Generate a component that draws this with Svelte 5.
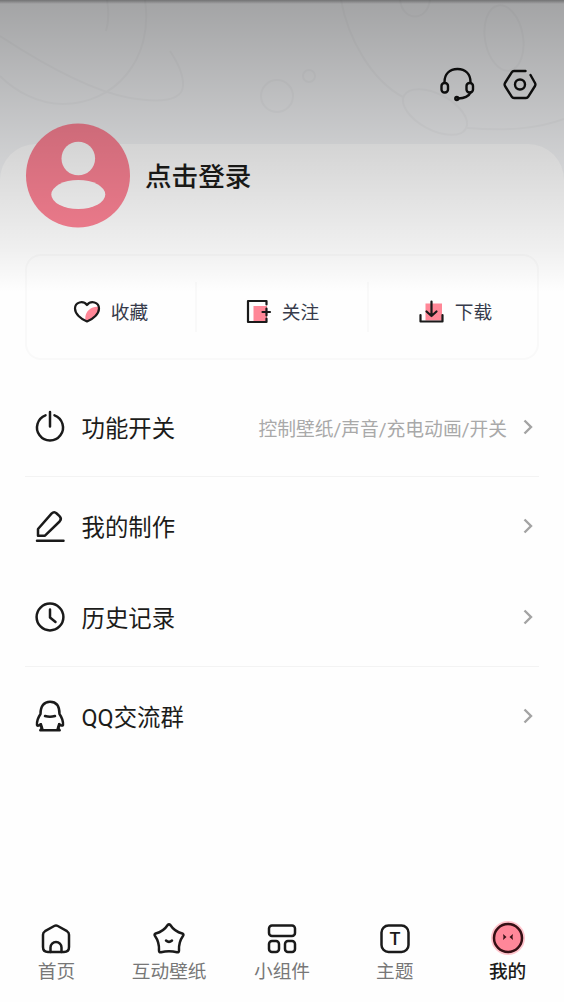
<script>
	const stats = [
		{ icon: 'heart', label: '收藏' },
		{ icon: 'follow', label: '关注' },
		{ icon: 'download', label: '下载' }
	];

	const groups = [
		[{ icon: 'power', label: '功能开关', hint: '控制壁纸/声音/充电动画/开关' }],
		[
			{ icon: 'pen', label: '我的制作' },
			{ icon: 'clock', label: '历史记录' }
		],
		[{ icon: 'qq', label: 'QQ交流群' }]
	];

	const tabs = [
		{ icon: 'home', label: '首页' },
		{ icon: 'star', label: '互动壁纸' },
		{ icon: 'widgets', label: '小组件' },
		{ icon: 'theme', label: '主题' },
		{ icon: 'me', label: '我的' }
	];

	let active = $state('me');
</script>

{#snippet icon(name)}
	<svg class="icon" width="34" height="34" viewBox="0 0 34 34">
		{#if name === 'heart'}
			<path class="pink" d="M29.500 13c-6-1.500-15 3-14.200 12.500l2 1.500c5.500-2.500 12.200-7.500 12.200-14z" />
			<path class="thin" d="M17 27.500C10.500 24.800 5 19.800 5 14.500c0-6.500 8-8.500 12-3.500C21 6 29 8 29 14.500c0 5.300-5.500 10.300-12 13z" />
		{:else if name === 'follow'}
			<path class="pink" d="M12.500 12H26v16H12.500z" />
			<path class="thin" d="M25.500 10.500V7H7v21h18.500v-3.500M21.500 18h7.500M25.500 14.500v7" />
		{:else if name === 'download'}
			<path class="pink" d="M11.500 9.500H28v17H11.500z" />
			<path class="thin" d="M6.500 21v6.500h22V21M17.500 7.500v14.500M12.500 17.500l5 4.500 5-4.500" />
		{:else if name === 'power'}
			<path d="M12.500 5.300a13 13 0 1 0 9 0M17 2v14.500" />
		{:else if name === 'pen'}
			<path d="M5 26.700V20L18.500 4.700q2.600-2.700 5.200-.2l2.800 2.700q2.600 2.700.1 5.300L12 26.700zM4 31.700h26.500" />
		{:else if name === 'clock'}
			<circle cx="17" cy="17" r="13.400" />
			<path d="M17 9.500v8l5.500 4.500" />
		{:else if name === 'qq'}
			<path d="M7.500 15C7.500 7 11 2.800 17 2.800S26.500 7 26.500 15c2.400 3.500 3.800 7.500 3.500 11-.3 1.200-2.500.5-3.800-.8.200 1.600-.3 2.800-1.200 3.800l1.700 2.200H7.300L9 29c-.9-1-1.400-2.200-1.200-3.800C6.500 26.500 4.300 27.200 4 26c-.3-3.500 1.100-7.500 3.500-11z" />
			<path d="M7.800 25.200l1.500 5M26.200 25.200l-1.500 5M12 17q5 1.500 10 0" />
		{:else if name === 'home'}
			<path d="M15.200 5q1.800-1 3.600 0l9.200 5.200q2 1.200 2 3.500v12.300q0 5-5 5H9q-5 0-5-5V13.700q0-2.300 2-3.500z" />
			<path d="M11.500 31v-4.500a5.500 5.500 0 0 1 11 0V31" />
		{:else if name === 'star'}
			<path d="M15.700 4q1.300-1.300 2.600 0 4.200 6.500 12 8.500 1.800.8.800 2.300-4.600 6.500-4.100 14.700 0 2-2 1.700-8-1.900-16 0-2 .3-2-1.700.5-8.200-4.100-14.700-1-1.500.8-2.300 7.800-2 12-8.500z" />
			<path d="M14 19.500q3 2.700 6 0" />
		{:else if name === 'widgets'}
			<rect x="4" y="4.500" width="26" height="10.500" rx="3" />
			<rect x="4" y="20" width="10" height="11" rx="3" />
			<rect x="20" y="20" width="10" height="11" rx="3" />
		{:else if name === 'theme'}
			<rect x="3.500" y="4.500" width="27" height="26.500" rx="7" />
			<text x="17" y="24">T</text>
		{:else if name === 'me'}
			<circle class="halo" cx="17" cy="17" r="16" />
			<circle class="face" cx="17" cy="17" r="14" />
			<path class="eye" d="M12 13l3.500 3-3.500 3 .5-3zM22 13l-3.500 3 3.500 3-.5-3z" />
		{/if}
	</svg>
{/snippet}

<main>
	<div class="shade"></div>

	<header>
		<svg class="doodle" width="564" height="180" viewBox="0 0 564 180">
			<path d="M107 0q3 18-1 31M145 0c9 60-31 104-82 104C38 104 15 91 0 76M0 36c55 36 98 56 130 62 30 5 52 3 53-12q1-14-13-35" />
			<path d="M341 0c7 38 30 80 62 97M467 128c40 3 70 1 97-9M400 0c3 22 27 22 30 0" />
			<circle cx="277" cy="96" r="16" />
			<circle cx="309" cy="76" r="6" />
			<ellipse cx="504" cy="38" rx="19" ry="33" transform="rotate(-10 504 38)" />
			<ellipse cx="435" cy="112" rx="35" ry="18" transform="rotate(28 435 112)" />
		</svg>
		<button aria-label="客服">
			<svg width="36" height="36" viewBox="0 0 36 36">
				<path d="M5.500 16C5.500 8 10.500 3 18.500 3s13 5 13 13M31.500 26.500c-1.500 3.500-5.500 5.700-12.500 6" />
				<rect x="2.500" y="17" width="6.500" height="9.500" rx="3" />
				<rect x="27.500" y="17" width="6.500" height="9.500" rx="3" />
				<circle cx="17.800" cy="32.500" r="1.500" />
			</svg>
		</button>
		<button aria-label="设置">
			<svg width="36" height="36" viewBox="0 0 36 36">
				<path d="M23.500 5H12q-1.500 0-2.300 1.300L3 17q-.8 1.500 0 3l6.700 10.700q.8 1.300 2.300 1.300h12q1.500 0 2.300-1.300L33 20q.8-1.500 0-3L28.500 9" />
				<circle cx="18" cy="18.500" r="5" />
			</svg>
		</button>
	</header>

	<section class="sheet">
		<div class="profile">
			<svg width="104" height="104" viewBox="0 0 104 104">
				<circle cx="52" cy="51.500" r="52" fill="#fd8395" />
				<circle cx="52.300" cy="34.500" r="16.800" fill="#fff" />
				<ellipse cx="52.300" cy="70.500" rx="27" ry="14.500" fill="#fff" />
			</svg>
			<h1>点击登录</h1>
		</div>

		<div class="stats">
			{#each stats as stat}
				<button class="stat">
					{@render icon(stat.icon)}
					<span>{stat.label}</span>
				</button>
			{/each}
		</div>

		{#each groups as rows}
			<ul>
				{#each rows as row}
					<li>
						{@render icon(row.icon)}
						<span class="label">{row.label}</span>
						{#if row.hint}
							<span class="hint">{row.hint}</span>
						{/if}
						<svg class="chevron" width="10" height="16" viewBox="0 0 10 16">
							<path d="M1.500 1.500L8 8l-6.500 6.500" />
						</svg>
					</li>
				{/each}
			</ul>
		{/each}
	</section>

	<nav>
		{#each tabs as tab}
			<button class:active={active === tab.icon} onclick={() => (active = tab.icon)}>
				{@render icon(tab.icon)}
				<span>{tab.label}</span>
			</button>
		{/each}
	</nav>
</main>

<style>
	:global(body) {
		margin: 0;
		background: #fefefe;
	}
	main {
		position: relative;
		display: flex;
		flex-direction: column;
		height: 1002px;
		overflow: hidden;
		background: #f4f5f7;
		font-family: Roboto, "Noto Sans CJK SC", sans-serif;
		color: #1c1c1a;
	}
	/* dims the top of the page under the status bar */
	.shade {
		position: absolute;
		inset: 0 0 auto;
		z-index: 2;
		height: 292px;
		background:
			linear-gradient(rgba(0, 0, 0, 0.3), rgba(0, 0, 0, 0) 4px),
			linear-gradient(rgba(0, 0, 0, 0.335), rgba(0, 0, 0, 0.165) 50%, rgba(0, 0, 0, 0.055) 86%, rgba(0, 0, 0, 0));
		pointer-events: none;
	}
	button {
		display: flex;
		align-items: center;
		justify-content: center;
		padding: 0;
		border: none;
		background: none;
		font: inherit;
		color: inherit;
		cursor: pointer;
	}
	svg {
		display: block;
		flex-shrink: 0;
		overflow: visible;
	}

	header {
		position: relative;
		display: flex;
		justify-content: flex-end;
		align-items: flex-start;
		gap: 27px;
		box-sizing: border-box;
		height: 144px;
		padding: 66px 26px 0 0;
	}
	header button svg {
		position: relative;
		fill: none;
		stroke: #111;
		stroke-width: 2.400;
		stroke-linecap: round;
		stroke-linejoin: round;
	}
	.doodle {
		position: absolute;
		top: 0;
		left: 0;
		fill: none;
		stroke: #eeeff1;
		stroke-width: 2;
	}

	.sheet {
		position: relative;
		flex: 1;
		padding: 0 25px;
		border-radius: 36px 36px 0 0;
		background: #fefefe;
	}
	.profile {
		display: flex;
		align-items: center;
		gap: 15px;
		margin: -20px 0 26px 1px;
	}
	h1 {
		margin: 1px 0 0;
		font-size: 26.600px;
		font-weight: 500;
		line-height: 40px;
	}

	.stats {
		display: flex;
		box-sizing: border-box;
		height: 106px;
		margin-bottom: 18px;
		padding: 26px 0;
		border: 2px solid #f9f9f9;
		border-radius: 16px;
	}
	.stat {
		box-sizing: border-box;
		width: 172px;
		gap: 7px;
		padding: 7px 4px 0 0;
		font-size: 18.700px;
		color: #373b4b;
	}
	.stat:first-child {
		width: 168px;
	}
	.stat:last-child {
		width: 170px;
		padding-right: 0;
	}
	.stat + .stat {
		border-left: 2px solid #f9f9f9;
	}

	ul {
		list-style: none;
		margin: 0;
		padding: 3px 0 4px;
	}
	ul:not(:last-child) {
		border-bottom: 1px solid #f3f3f3;
	}
	li {
		display: flex;
		align-items: center;
		height: 91px;
		padding: 0 6px 0 8px;
	}
	.label {
		margin-left: 14.500px;
		font-size: 23.400px;
	}
	.hint {
		margin-left: auto;
		padding-top: 1px;
		font-size: 18.800px;
		color: #a9a9a9;
	}
	.chevron {
		margin-left: auto;
		fill: none;
		stroke: #a3a3a3;
		stroke-width: 2.400;
	}
	.hint + .chevron {
		margin-left: 16px;
	}

	.icon {
		fill: none;
		stroke: #1a1a1a;
		stroke-width: 2.500;
		stroke-linecap: round;
		stroke-linejoin: round;
	}
	.thin {
		stroke-width: 2.200;
	}
	.pink {
		fill: #ff8797;
		stroke: none;
	}
	.icon text {
		fill: #1a1a1a;
		stroke: none;
		font: 500 18px Roboto, sans-serif;
		text-anchor: middle;
	}
	.halo {
		fill: #ff8a9c;
		stroke: #ffc4cc;
		stroke-width: 2;
	}
	.face {
		fill: #ff8799;
		stroke: #351015;
	}
	.eye {
		fill: #351015;
		stroke: none;
	}

	nav {
		display: flex;
		height: 85px;
		background: #fefefe;
	}
	nav button {
		flex: 1;
		flex-direction: column;
		justify-content: flex-start;
		padding-top: 4px;
		font-size: 18.700px;
		line-height: 28px;
		color: #777;
	}
	nav span {
		margin-top: 3px;
	}
	nav .active {
		font-weight: 500;
		color: #1c1c1a;
	}
</style>
